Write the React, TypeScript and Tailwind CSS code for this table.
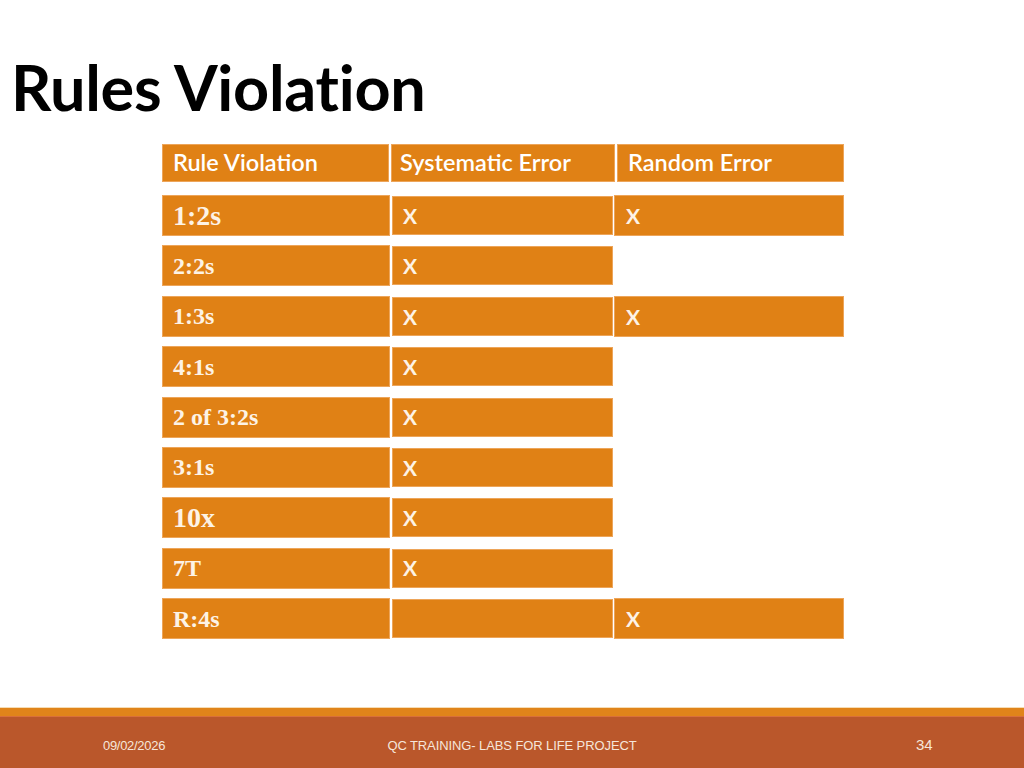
type Row = { rule: string; big?: boolean; sys: boolean; rand: boolean };

const rows: Row[] = [
  { rule: '1:2s', big: true, sys: true, rand: true },
  { rule: '2:2s', sys: true, rand: false },
  { rule: '1:3s', sys: true, rand: true },
  { rule: '4:1s', sys: true, rand: false },
  { rule: '2 of 3:2s', sys: true, rand: false },
  { rule: '3:1s', sys: true, rand: false },
  { rule: '10x', big: true, sys: true, rand: false },
  { rule: '7T', sys: true, rand: false },
  { rule: 'R:4s', sys: false, rand: true },
];

const sans = "font-['Lato','Open_Sans',sans-serif]";

export default function App() {
  return (
    <div className="w-[1024px] h-[768px] bg-white flex flex-col overflow-hidden">
      <h1
        className={`${sans} font-bold text-black text-[63px] leading-none tracking-[-0.3px] pl-[11px] pt-[55px]`}
      >
        Rules Violation
      </h1>

      <div className="ml-[162px] w-[682px] mt-[26px] flex flex-col">
        <div className={`${sans} flex gap-[2px] h-[38px] text-white text-[23.5px] font-semibold`}>
          <div className="w-[227px] bg-[#e08115] border border-[#eda55a] flex items-center pl-[10px]">
            Rule Violation
          </div>
          <div className="w-[224px] bg-[#e08115] border border-[#eda55a] flex items-center pl-[8px]">
            Systematic Error
          </div>
          <div className="w-[227px] bg-[#e08115] border border-[#eda55a] flex items-center pl-[10px]">
            Random Error
          </div>
        </div>

        <div className="flex flex-col gap-[9.4px] mt-[13px]">
          {rows.map((r) => (
            <div key={r.rule} className="flex items-start h-[41px]">
              <div
                className={`w-[228px] h-[41px] bg-[#e08115] border border-[#eda55a] flex items-center pl-[10px] text-[#fdf3e6] font-bold font-['Liberation_Serif','Times_New_Roman',serif] ${
                  r.big ? 'text-[28px]' : 'text-[24px]'
                }`}
              >
                {r.rule}
              </div>
              <div
                className={`${sans} ml-[2px] mt-px w-[221px] h-[39px] bg-[#e08115] border border-[#eda55a] flex items-center pl-[10px] text-[#fdf3e6] font-bold text-[21px]`}
              >
                {r.sys ? 'X' : ''}
              </div>
              {r.rand && (
                <div
                  className={`${sans} ml-px w-[230px] h-[41px] bg-[#e08115] border border-[#eda55a] flex items-center pl-[11px] text-[#fdf3e6] font-bold text-[21px]`}
                >
                  X
                </div>
              )}
            </div>
          ))}
        </div>
      </div>

      <div className="mt-auto">
        <div className="h-px bg-[#f6dcb4]" />
        <div className="h-[8px] bg-[#e0841a]" />
        <div className="h-px bg-[#d9703a]" />
        <div className="h-[51px] bg-[#ba572b] font-['Liberation_Sans',Arial,sans-serif] text-[#f6e6da] relative">
          <span className="absolute left-[103px] top-[19px] text-[13px] tracking-[-0.3px]">09/02/2026</span>
          <span className="absolute left-0 right-0 top-[19px] text-center text-[13px] tracking-[-0.1px]">
            QC TRAINING- LABS FOR LIFE PROJECT
          </span>
          <span className="absolute left-[916px] top-[17px] text-[15px]">34</span>
        </div>
      </div>
    </div>
  );
}
